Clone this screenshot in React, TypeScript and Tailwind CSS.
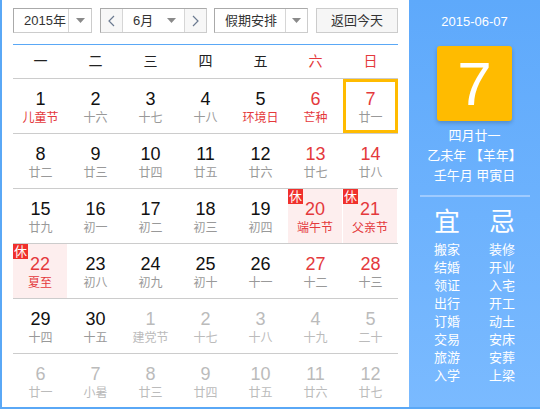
import React from "react";

type Day = {
  n: number;
  l: string;
  fest?: boolean;
  other?: boolean;
  rest?: boolean;
  today?: boolean;
  red?: boolean;
};

const weeks: Day[][] = [
  [
    { n: 1, l: "儿童节", fest: true },
    { n: 2, l: "十六" },
    { n: 3, l: "十七" },
    { n: 4, l: "十八" },
    { n: 5, l: "环境日", fest: true },
    { n: 6, l: "芒种", fest: true },
    { n: 7, l: "廿一", today: true },
  ],
  [
    { n: 8, l: "廿二" },
    { n: 9, l: "廿三" },
    { n: 10, l: "廿四" },
    { n: 11, l: "廿五" },
    { n: 12, l: "廿六" },
    { n: 13, l: "廿七" },
    { n: 14, l: "廿八" },
  ],
  [
    { n: 15, l: "廿九" },
    { n: 16, l: "初一" },
    { n: 17, l: "初二" },
    { n: 18, l: "初三" },
    { n: 19, l: "初四" },
    { n: 20, l: "端午节", fest: true, rest: true },
    { n: 21, l: "父亲节", fest: true, rest: true },
  ],
  [
    { n: 22, l: "夏至", fest: true, rest: true, red: true },
    { n: 23, l: "初八" },
    { n: 24, l: "初九" },
    { n: 25, l: "初十" },
    { n: 26, l: "十一" },
    { n: 27, l: "十二" },
    { n: 28, l: "十三" },
  ],
  [
    { n: 29, l: "十四" },
    { n: 30, l: "十五" },
    { n: 1, l: "建党节", other: true },
    { n: 2, l: "十七", other: true },
    { n: 3, l: "十八", other: true },
    { n: 4, l: "十九", other: true },
    { n: 5, l: "二十", other: true },
  ],
  [
    { n: 6, l: "廿一", other: true },
    { n: 7, l: "小暑", other: true },
    { n: 8, l: "廿三", other: true },
    { n: 9, l: "廿四", other: true },
    { n: 10, l: "廿五", other: true },
    { n: 11, l: "廿六", other: true },
    { n: 12, l: "廿七", other: true },
  ],
];

const weekdays = ["一", "二", "三", "四", "五", "六", "日"];
const good = ["搬家", "结婚", "领证", "出行", "订婚", "交易", "旅游", "入学"];
const bad = ["装修", "开业", "入宅", "开工", "动土", "安床", "安葬", "上梁"];

const Caret = () => (
  <svg width="9" height="5" viewBox="0 0 9 5">
    <path d="M0 0h9L4.5 5z" fill="#8a8a8a" />
  </svg>
);

const Chevron = ({ dir }: { dir: "l" | "r" }) => (
  <svg width="7" height="12" viewBox="0 0 7 12">
    <path
      d={dir === "l" ? "M6 1L1 6l5 5" : "M1 1l5 5-5 5"}
      fill="none"
      stroke="#6b7a90"
      strokeWidth="1.2"
    />
  </svg>
);

const DayCell = ({ d, col }: { d: Day; col: number }) => {
  const weekend = col >= 5;
  const numColor = d.other
    ? "text-[#bbbbbb]"
    : weekend || d.red
      ? "text-[#e4393c]"
      : "text-[#111]";
  const lunarColor = d.other
    ? "text-[#bbbbbb]"
    : d.fest
      ? "text-[#e4393c]"
      : "text-[#999999]";
  return (
    <div
      className={`relative flex flex-col items-center h-full ${
        d.rest ? "bg-[#fdeeee] mr-px" : ""
      } ${d.today ? "border-[3px] border-[#ffbb00] pt-[6px]" : "pt-[9px]"}`}
    >
      {d.rest && (
        <span className="absolute left-0 top-0 w-[15px] h-[15px] bg-[#f0302c] text-white text-[13px] leading-[15px] text-center">
          休
        </span>
      )}
      <span className={`text-[18px] leading-[22px] ${numColor}`}>{d.n}</span>
      <span className={`text-[12px] leading-[17px] ${lunarColor}`}>{d.l}</span>
    </div>
  );
};

export default function App() {
  return (
    <div className="w-[540px] h-[409px] flex overflow-hidden bg-white border-l-2 border-b-2 border-[#5aa8f6] font-['Liberation_Sans','Noto_Sans_CJK_SC',sans-serif]">
      <div className="w-[407px] shrink-0 pl-[11px]">
        {/* toolbar */}
        <div className="flex items-start pt-[8px] h-[33px] text-[13px] text-[#333]">
          <div className="flex w-[79px] h-[25px] border border-[#aaaaaa] border-b-[#cccccc] border-r-[#cccccc]">
            <div className="w-[54px] flex items-center pl-[10px]">2015年</div>
            <div className="flex-1 flex items-center justify-center border-l border-[#d6d6d6]">
              <Caret />
            </div>
          </div>
          <div className="ml-[8px] flex w-[107px] h-[25px] border border-[#aaaaaa] border-b-[#cccccc] border-r-[#cccccc]">
            <div className="w-[22px] flex items-center justify-center bg-[#f7f7f7] border-r border-[#d6d6d6]">
              <Chevron dir="l" />
            </div>
            <div className="flex-1 flex items-center justify-between pl-[10px] pr-[8px]">
              <span>6月</span>
              <Caret />
            </div>
            <div className="w-[22px] flex items-center justify-center bg-[#f7f7f7] border-l border-[#d6d6d6]">
              <Chevron dir="r" />
            </div>
          </div>
          <div className="ml-[7px] flex w-[94px] h-[25px] border border-[#aaaaaa] border-b-[#cccccc] border-r-[#cccccc]">
            <div className="w-[70px] flex items-center pl-[10px]">假期安排</div>
            <div className="flex-1 flex items-center justify-center border-l border-[#d6d6d6]">
              <Caret />
            </div>
          </div>
          <button className="ml-[8px] w-[82px] h-[25px] border border-[#cccccc] bg-[#f6f6f6] text-[13px] text-[#333]">
            返回今天
          </button>
        </div>

        {/* calendar */}
        <div className="mt-[11px] w-[385px] border-t border-[#5aa8f6]">
          <div className="grid grid-cols-7 h-[34px] items-center border-b border-[#cccccc] text-[14px]">
            {weekdays.map((w, i) => (
              <div
                key={w}
                className={`text-center ${i >= 5 ? "text-[#e4393c]" : "text-[#222]"}`}
              >
                {w}
              </div>
            ))}
          </div>
          {weeks.map((week, r) => (
            <div
              key={r}
              className={`grid grid-cols-7 h-[55px] ${r < 5 ? "border-b border-[#cccccc]" : ""}`}
            >
              {week.map((d, c) => (
                <DayCell key={c} d={d} col={c} />
              ))}
            </div>
          ))}
        </div>
      </div>

      {/* side panel */}
      <div className="flex-1 flex flex-col items-center bg-gradient-to-b from-[#5ea9fb] to-[#7abaff] text-white">
        <div className="mt-[13px] text-[13px] leading-[18px]">2015-06-07</div>
        <div className="mt-[15px] w-[75px] h-[75px] rounded-[3px] bg-[#ffbb00] shadow-[0_2px_4px_rgba(0,0,0,0.2)] flex items-center justify-center text-[62px] font-light leading-none">
          7
        </div>
        <div className="mt-[5px] text-[13px] leading-[20px] text-center">
          <div>四月廿一</div>
          <div>乙未年 【羊年】</div>
          <div>壬午月 甲寅日</div>
        </div>
        <div className="mt-[9px] w-[110px] h-[2px] bg-[#9fcbff]" />
        <div className="mt-[10px] flex gap-[5px]">
          {[
            { t: "宜", items: good },
            { t: "忌", items: bad },
          ].map((g) => (
            <div key={g.t} className="w-[50px] flex flex-col items-center">
              <div className="text-[26px] leading-[30px]">{g.t}</div>
              <div className="mt-[4px] text-[13px] leading-[18px] text-center">
                {g.items.map((x) => (
                  <div key={x}>{x}</div>
                ))}
              </div>
            </div>
          ))}
        </div>
      </div>
    </div>
  );
}
